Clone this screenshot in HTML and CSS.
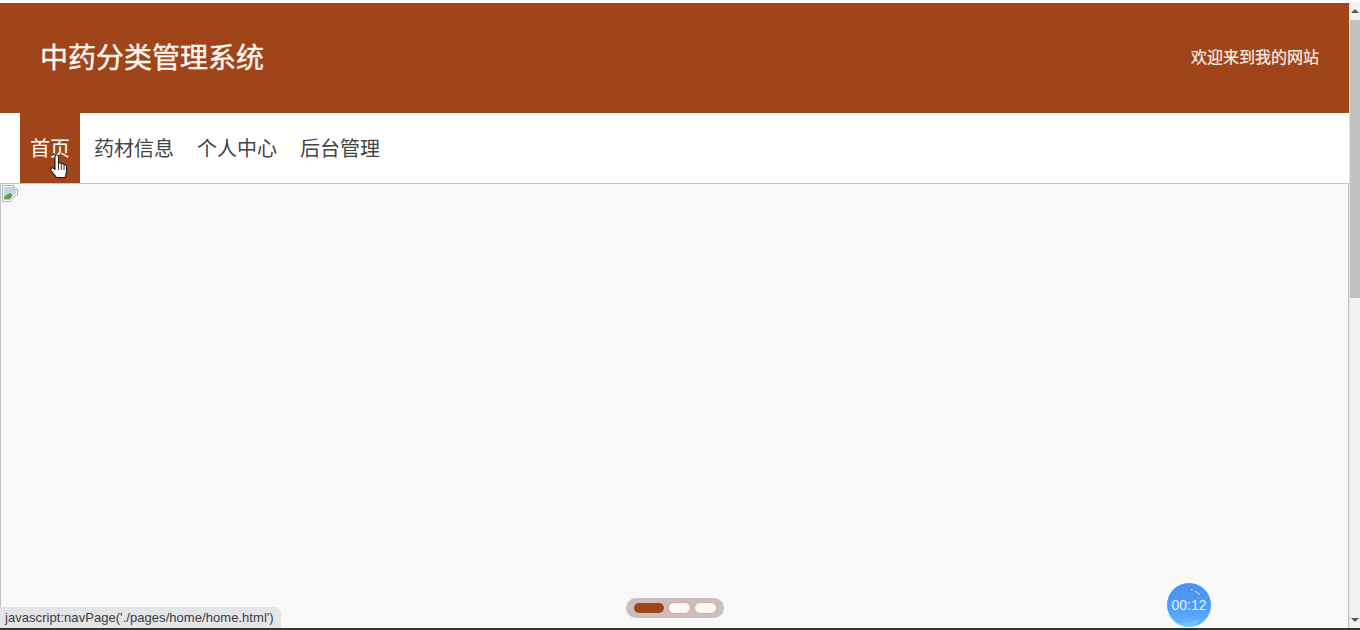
FILE: index.html
```html
<!DOCTYPE html>
<html lang="zh-CN">
<head>
<meta charset="utf-8">
<title>中药分类管理系统</title>
<link rel="stylesheet" href="styles.css">
</head>
<body>
<div class="top-edge"></div>
<div class="window">
  <main class="page">
    <header class="header">
      <h1 class="title">中药分类管理系统</h1>
      <span class="welcome">欢迎来到我的网站</span>
    </header>
    <nav class="nav">
      <a class="nav-item active">首页</a>
      <a class="nav-item">药材信息</a>
      <a class="nav-item">个人中心</a>
      <a class="nav-item">后台管理</a>
    </nav>
    <section class="banner">
      <svg class="broken" width="17" height="17" viewBox="0 0 17 17">
        <path d="M.5.5h11l4 4v5.500l-3 1-3 4-1 1.500H.500z" fill="#fff" stroke="#b0b0b0"/>
        <path d="M11.500.5v4h4" fill="#f4f4f4" stroke="#b0b0b0"/>
        <path d="M2 2h9v3.500h3V9l-2.500.5L8 7 2 11z" fill="#c3d2e8"/>
        <path d="M2 14.500v-3L8 7.500l3 2.500-3 4.500z" fill="#5ea24c"/>
      </svg>
      <div class="dots">
        <span class="dot current"></span>
        <span class="dot"></span>
        <span class="dot"></span>
      </div>
    </section>
  </main>
  <aside class="scrollbar">
    <span class="arrow up"></span>
    <span class="thumb"></span>
    <span class="track"></span>
    <span class="arrow down"></span>
  </aside>
</div>
<div class="bottom-edge"></div>
<div class="status">javascript:navPage('./pages/home/home.html')</div>
<div class="timer">00:12
  <svg class="timer-arc" width="44" height="44" viewBox="0 0 44 44">
    <path d="M24 6.500l1.500.5M28 8l5 3.500" stroke="#dfeeff" stroke-width="1" fill="none"/>
    <path d="M9 41c8-2 16-1 24-5-3 6-8 8-13 8-4 0-8-1-11-3z" fill="#7ccbff" opacity=".7"/>
  </svg>
</div>
<svg class="cursor" width="18" height="25" viewBox="0 0 18 25">
  <path d="M5 2.500C5 .5 8.500.5 8.500 2.500V9.500C9 8.500 11 8.500 11.300 10 12 9.200 13.800 9.500 14 11 14.800 10.500 16.500 10.800 16.500 12.500V17.500C16.500 20 15.500 21.500 15 23.500H6.500C5.500 21.500 2 18.500 1 16.500.3 15 2 13 3.500 14.200L5 15.500z" fill="#fff" stroke="#1a1a1a" stroke-width="1.100" stroke-linejoin="round"/>
  <path d="M8.500 10v6M11.300 10.500V16M14 11.500V16" stroke="#1a1a1a" stroke-width=".9" fill="none"/>
</svg>
</body>
</html>
```

FILE: styles.css
```css
* { box-sizing: border-box; }
html, body {
  margin: 0;
  height: 630px;
  overflow: hidden;
}
body {
  display: flex;
  flex-direction: column;
  background: #f8f8f8;
  font-family: "Liberation Sans", "Noto Sans CJK SC", sans-serif;
  position: relative;
}
.top-edge { height: 3px; background: #fafafa; flex: none; }
.bottom-edge { height: 2px; background: #33352c; flex: none; }
.window { flex: 1; display: flex; min-height: 0; }
.page { flex: 1; display: flex; flex-direction: column; min-width: 0; }
.header {
  height: 110px;
  flex: none;
  background: #a04419;
  color: #fff;
  display: flex;
  align-items: center;
  justify-content: space-between;
  padding: 0 30px 4px 40px;
}
.title {
  margin: 0;
  font-size: 28px;
  font-weight: 400;
  color: #fdf6f0;
  -webkit-text-stroke: .4px #fdf6f0;
}
.welcome {
  font-size: 16px;
  color: #fbeee6;
  -webkit-text-stroke: .2px #fbeee6;
}
.nav {
  height: 70px;
  flex: none;
  background: #fff;
  display: flex;
  padding-left: 20px;
  gap: 3px;
}
.nav-item {
  padding: 0 10px;
  font-size: 20px;
  line-height: 72px;
  color: #444;
}
.nav-item.active {
  background: #a04419;
  color: #fff;
  margin-right: 1px;
}
.banner {
  flex: 1;
  background: #f8f8f8;
  border: 1px solid #c4c4c4;
  border-bottom: 0;
  position: relative;
}
.broken { display: block; margin: 1px 0 0 1px; }
.dots {
  position: absolute;
  left: 625px;
  bottom: 10px;
  width: 98px;
  height: 20px;
  border-radius: 10px;
  background: #cdbebe;
  display: flex;
  align-items: center;
  gap: 5px;
  padding: 0 8px;
}
.dot {
  width: 21px;
  height: 10px;
  border-radius: 5px;
  background: #fdf8f6;
  box-shadow: 0 0 0 1px #e0a9a0;
}
.dot.current {
  width: 30px;
  background: #a04419;
  box-shadow: none;
}
.scrollbar {
  width: 11px;
  flex: none;
  background: #f1f1f1;
  border-left: 1px solid #e2e2e2;
  display: flex;
  flex-direction: column;
  align-items: center;
}
.arrow {
  height: 17px;
  flex: none;
  position: relative;
  width: 100%;
}
.arrow::after {
  content: "";
  position: absolute;
  left: 1px;
  border-left: 4px solid transparent;
  border-right: 4px solid transparent;
}
.arrow.up::after { top: 6px; border-bottom: 4px solid #555; }
.arrow.down::after { bottom: 6px; border-top: 4px solid #555; }
.thumb { width: 100%; height: 278px; flex: none; background: #c1c1c1; }
.track { flex: 1; }
.status {
  position: absolute;
  left: 0;
  bottom: 2px;
  height: 21px;
  padding: 3px 7px 0 5px;
  background: #e3e5e9;
  border-top-right-radius: 6px;
  font-family: "Liberation Sans", "Noto Sans", sans-serif;
  font-size: 13px;
  letter-spacing: .05px;
  color: #3c3c3c;
}
.timer {
  position: absolute;
  left: 1166px;
  top: 582px;
  width: 46px;
  height: 46px;
  border-radius: 50%;
  border: 1px solid #fff;
  background: linear-gradient(180deg, #4a92f2 0%, #4f9cf8 60%, #66beff 100%);
  color: #e8f3ff;
  font-size: 14px;
  line-height: 44px;
  text-align: center;
  overflow: hidden;
}
.timer-arc { position: absolute; left: 0; top: 0; }
.cursor { position: absolute; left: 50px; top: 154px; }
```
